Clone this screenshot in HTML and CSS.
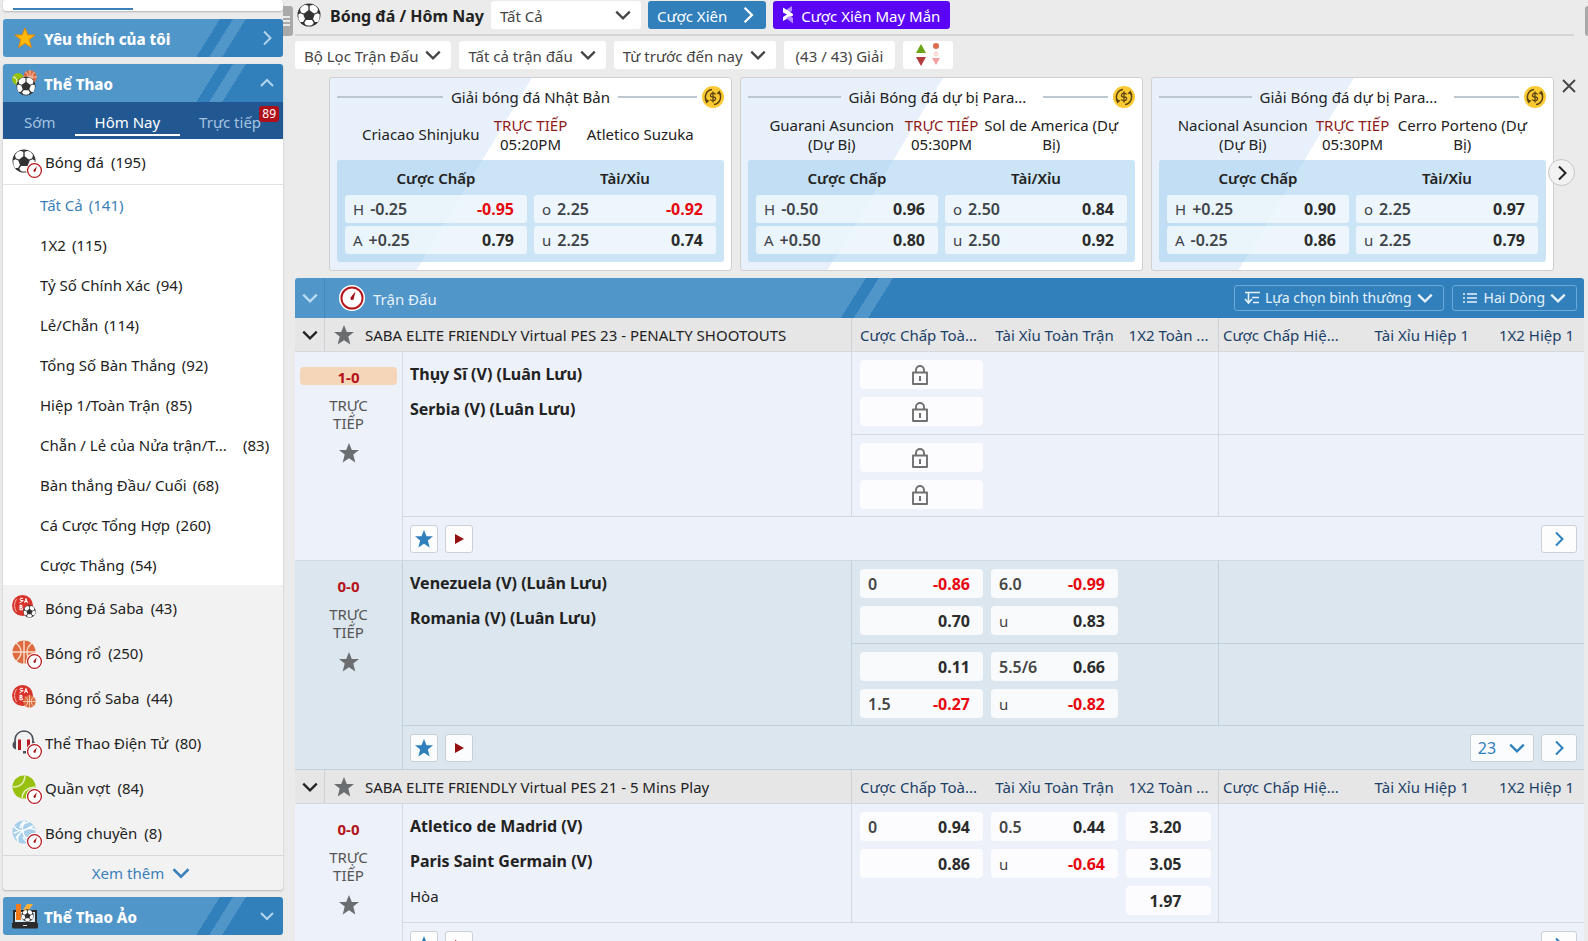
FILE: index.html
```html
<!DOCTYPE html>
<html lang="vi">
<head>
<meta charset="utf-8">
<title>Bóng đá / Hôm Nay</title>
<link rel="stylesheet" href="styles.css">
</head>
<body>
<svg class="defs" aria-hidden="true">
  <symbol id="i-down" viewBox="0 0 16 16"><path d="M2 5l6 6 6-6" fill="none" stroke="currentColor" stroke-width="2"/></symbol>
  <symbol id="i-up" viewBox="0 0 16 16"><path d="M2 11l6-6 6 6" fill="none" stroke="currentColor" stroke-width="2"/></symbol>
  <symbol id="i-right" viewBox="0 0 16 16"><path d="M5 1.500l6.500 6.500L5 14.500" fill="none" stroke="currentColor" stroke-width="2"/></symbol>
  <symbol id="i-star" viewBox="0 0 20 20"><path d="M10 0l2.800 7H20l-5.700 4.600 2 7.900L10 15.200l-6.300 4.300 2-7.900L0 7h7.200z" fill="currentColor"/></symbol>
  <symbol id="i-play" viewBox="0 0 12 12"><path d="M2 1l9 5-9 5z" fill="currentColor"/></symbol>
  <symbol id="i-lock" viewBox="0 0 16 20"><path d="M1 7.500h14v11.500H1zM4 7.500V5a4 4 0 0 1 8 0v2.500" fill="none" stroke="currentColor" stroke-width="1.900" stroke-linejoin="round"/><path d="M8 11v5" stroke="currentColor" stroke-width="2"/></symbol>
  <symbol id="i-ball" viewBox="0 0 24 24"><circle cx="12" cy="12" r="11.500" fill="#333"/><g fill="#fff"><path d="M12.700 2.800l3.300-1q3.600 1.500 5 4.300l-.8 3.200-3.200 1.200-4.300-3.200z"/><path d="M11.300 2.800L8 1.800Q4.400 3.300 3 6.100l.8 3.200L7 10.500l4.300-3.200z"/><path d="M1.300 11.500l2-1.300 3 1.200 1.700 4.600-2 3-3 .1q-2-3.300-1.700-7.600z"/><path d="M22.700 11.500l-2-1.300-3 1.200-1.700 4.600 2 3 3 .1q2-3.300 1.700-7.600z"/><path d="M9 17h6l1.700 2.700-1.500 2.300q-3.200 1-6.400 0l-1.500-2.300z"/></g></symbol>
  <symbol id="i-clock" viewBox="0 0 16 16"><circle cx="8" cy="8" r="8" fill="#fff"/><circle cx="8" cy="8" r="6.500" fill="#fff" stroke="#b5161c" stroke-width="1.200"/><path d="M7.400 9.200L7 7.800l3.200-3.900-1.300 5.200z" fill="#a01015"/></symbol>
  <symbol id="i-basket" viewBox="0 0 24 24"><circle cx="12" cy="12" r="11.500" fill="#dd6b3f"/><path d="M12 0v24M0 12h24M4 3q5 4 5 9t-5 9M20 3q-5 4-5 9t5 9" fill="none" stroke="#f7dccb" stroke-width="1.400"/></symbol>
  <symbol id="i-saba" viewBox="0 0 22 22"><circle cx="10.500" cy="10.500" r="10.500" fill="#d8342c"/><path d="M4.500 4q-4 6.500 0 13" fill="none" stroke="#f3b4b0" stroke-width="1"/></symbol>
  <symbol id="i-headset" viewBox="0 0 24 24"><path d="M3 12V9.500a9 8.500 0 0 1 18 0V12" fill="none" stroke="#4a4f58" stroke-width="1.600"/><path d="M4 10.500v9q-3.500-1-3.500-4.500t3.500-4.500zM20 10.500v9q3.500-1 3.500-4.500t-3.500-4.500zM11 21h3v2.500h-3z" fill="#4a4f58"/><path d="M6 9.500h3v10.500H6zM15 9.500h3v10.500h-3z" fill="#b71c22"/></symbol>
  <symbol id="i-tennis" viewBox="0 0 24 24"><circle cx="12" cy="12" r="11.500" fill="#97c00f"/><path d="M1 12q11 0 12-11M10 23q1-10 13-11" fill="none" stroke="#e4efb8" stroke-width="1.500"/></symbol>
  <symbol id="i-volley" viewBox="0 0 24 24"><circle cx="12" cy="12" r="11.500" fill="#a9d0ea"/><path d="M11 11Q8 3 17 2M11 11q7-5 12-1M11 11q0 8 9 9M11 11q-6 0-9-5M11 11q-7 4-5 11M8 8q1-5 5-7M2 13q4-1 6-3M4 18q2-3 4-4M16 8q3-1 5-2M15 18q5-3 8-2M11 17q1 3 4 5" fill="none" stroke="#fff" stroke-width="1.400"/></symbol>
  <symbol id="i-coin" viewBox="0 0 22 22"><circle cx="11" cy="11" r="11" fill="#fbc932"/><path d="M5 15.500A7.500 7.500 0 0 1 10 3.500M17 6.500a7.500 7.500 0 0 1-5 12" fill="none" stroke="#5b4312" stroke-width="1.500"/><path d="M2.500 13l2 4.500 3-3zM19.500 9l-2-4.500-3 3z" fill="#5b4312"/><path d="M13.600 8.600Q13 7.200 11 7.200T8.500 9.100t2.500 1.900 2.600 1.900-2.600 1.900-2.700-1.400M11 5.500v11" fill="none" stroke="#5b4312" stroke-width="1.300"/></symbol>
</svg>

<div class="app">
  <aside class="sidebar">
    <div class="side-card side-top"><span class="side-top-line"></span></div>
    <button class="side-bar"><svg class="star-gold" width="24" height="24" viewBox="-2 -2 24 24"><path d="M10 0l2.800 7H20l-5.700 4.600 2 7.900L10 15.200l-6.300 4.300 2-7.900L0 7h7.200z" fill="#ffb90a" stroke="#e68a00"/></svg><span class="side-title">Yêu thích của tôi</span><svg class="side-chev" width="16" height="16"><use href="#i-right"/></svg></button>

    <section class="side-card">
      <button class="side-bar side-bar-open"><svg width="26" height="26" viewBox="0 0 26 26"><circle cx="6" cy="9" r="6" fill="#97c00f"/><path d="M1 7q4 0 4 6" stroke="#fff" fill="none"/><svg x="11" y="0" width="14" height="14"><use href="#i-basket"/></svg><svg x="4" y="6" width="20" height="20"><use href="#i-ball"/></svg></svg><span class="side-title">Thể Thao</span><svg class="side-chev" width="16" height="16"><use href="#i-up"/></svg></button>
      <nav class="side-tabs">
        <a href="#" class="side-tab">Sớm</a>
        <a href="#" class="side-tab side-tab-on">Hôm Nay</a>
        <a href="#" class="side-tab">Trực tiếp<span class="side-badge">89</span></a>
      </nav>
      <a href="#" class="sport sport-on"><span class="sport-icon"><svg width="24" height="24"><use href="#i-ball"/></svg><svg class="live" width="17" height="17"><use href="#i-clock"/></svg></span>Bóng đá<span class="count">(195)</span></a>
      <div class="subs">
        <a href="#" class="sub sub-on">Tất Cả<span class="count">(141)</span></a>
        <a href="#" class="sub">1X2<span class="count">(115)</span></a>
        <a href="#" class="sub">Tỷ Số Chính Xác<span class="count">(94)</span></a>
        <a href="#" class="sub">Lẻ/Chẵn<span class="count">(114)</span></a>
        <a href="#" class="sub">Tổng Số Bàn Thắng<span class="count">(92)</span></a>
        <a href="#" class="sub">Hiệp 1/Toàn Trận<span class="count">(85)</span></a>
        <a href="#" class="sub"><span class="sub-long">Chẵn / Lẻ của Nửa trận/T...</span><span class="count">(83)</span></a>
        <a href="#" class="sub">Bàn thắng Đầu/ Cuối<span class="count">(68)</span></a>
        <a href="#" class="sub">Cá Cược Tổng Hợp<span class="count">(260)</span></a>
        <a href="#" class="sub">Cược Thắng<span class="count">(54)</span></a>
      </div>
      <div class="sports">
        <a href="#" class="sport"><span class="sport-icon"><svg width="22" height="22"><use href="#i-saba"/><path class="saba-mark" d="M11 3.500q-3-1-3 .8t2.500 1.200T7.500 7.800M12.500 8L14 3.500 15.500 8M13 6.500h2M8 10v5M8 10q3 0 2 2.200H8q3 0 2.500 2.600H8"/></svg><svg class="mini" width="13" height="13"><use href="#i-ball"/></svg></span>Bóng Đá Saba<span class="count">(43)</span></a>
        <a href="#" class="sport"><span class="sport-icon"><svg width="24" height="24"><use href="#i-basket"/></svg><svg class="live" width="17" height="17"><use href="#i-clock"/></svg></span>Bóng rổ<span class="count">(250)</span></a>
        <a href="#" class="sport"><span class="sport-icon"><svg width="22" height="22"><use href="#i-saba"/><path class="saba-mark" d="M11 3.500q-3-1-3 .8t2.500 1.200T7.500 7.800M12.500 8L14 3.500 15.500 8M13 6.500h2M8 10v5M8 10q3 0 2 2.200H8q3 0 2.500 2.600H8"/></svg><svg class="mini" width="13" height="13"><use href="#i-basket"/></svg></span>Bóng rổ Saba<span class="count">(44)</span></a>
        <a href="#" class="sport"><span class="sport-icon"><svg width="24" height="24"><use href="#i-headset"/></svg><svg class="live" width="17" height="17"><use href="#i-clock"/></svg></span>Thể Thao Điện Tử<span class="count">(80)</span></a>
        <a href="#" class="sport"><span class="sport-icon"><svg width="24" height="24"><use href="#i-tennis"/></svg><svg class="live" width="17" height="17"><use href="#i-clock"/></svg></span>Quần vợt<span class="count">(84)</span></a>
        <a href="#" class="sport"><span class="sport-icon"><svg width="24" height="24"><use href="#i-volley"/></svg><svg class="live" width="17" height="17"><use href="#i-clock"/></svg></span>Bóng chuyền<span class="count">(8)</span></a>
      </div>
      <button class="more">Xem thêm<svg width="20" height="20"><use href="#i-down"/></svg></button>
    </section>

    <button class="side-bar"><svg width="26" height="26" viewBox="0 0 26 26"><path d="M2 8h22v12H2z" fill="#d9ecf6" stroke="#2b2b2b" stroke-width="2"/><path d="M4 1h5v16H4z" fill="#f07a1c"/><path d="M11 7l4-6h6l-4 6z" fill="#fbb03b"/><svg x="9" y="6" width="13" height="13"><use href="#i-ball"/></svg><path d="M0 20h26v4q0 1.500-2 1.500H2q-2 0-2-1.500z" fill="#2b2b2b"/><path d="M11 22h4v1h-4z" fill="#ddd"/></svg><span class="side-title">Thể Thao Ảo</span><svg class="side-chev" width="16" height="16"><use href="#i-down"/></svg></button>
    <div class="side-bar"></div>
  </aside>

  <button class="handle" aria-label="Thu gọn"><svg width="8" height="12" viewBox="0 0 8 12"><path d="M0 2h7M0 6h7M0 10h7" stroke="#fff" stroke-width="1.500"/></svg></button>

  <main class="main">
    <header class="head">
      <svg width="24" height="24"><use href="#i-ball"/></svg>
      <h1 class="head-title">Bóng đá / Hôm Nay</h1>
      <button class="pick pick-wide">Tất Cả<svg width="18" height="18"><use href="#i-down"/></svg></button>
      <button class="pill pill-blue">Cược Xiên<svg width="18" height="18"><use href="#i-right"/></svg></button>
      <button class="pill pill-purple"><svg width="12" height="18" viewBox="0 0 12 18"><path d="M10 0v5L5 8 1 6z" fill="#b58cff"/><path d="M1 1.500L11 8v1.500L1 15v-4l4-2.500-4-2z" fill="#fff"/><path d="M4 12l7 5.500V12L8 10z" fill="#b58cff"/></svg>Cược Xiên May Mắn</button>
    </header>
    <div class="filters">
      <button class="pick">Bộ Lọc Trận Đấu<svg width="18" height="18"><use href="#i-down"/></svg></button>
      <button class="pick">Tất cả trận đấu<svg width="18" height="18"><use href="#i-down"/></svg></button>
      <button class="pick">Từ trước đến nay<svg width="18" height="18"><use href="#i-down"/></svg></button>
      <button class="pick pick-plain">(43 / 43) Giải</button>
      <button class="pick pick-icon" aria-label="Biến động"><svg width="26" height="24" viewBox="0 0 26 24"><path d="M6 1l5 9H1z" fill="#6aa414"/><path d="M1 14h10l-5 9z" fill="#b33a3a"/><circle cx="21" cy="3" r="3" fill="#dd6b4d"/><circle cx="21" cy="11" r="2.500" fill="#fbdcd8"/><path d="M17 15h8l-4 7z" fill="#f0a0a0"/></svg></button>
    </div>

    <section class="carousel">
      <article class="card">
        <div class="card-head"><span class="rule"></span><span class="card-title">Giải bóng đá Nhật Bản</span><span class="card-end"><span class="rule"></span><svg width="22" height="22"><use href="#i-coin"/></svg></span></div>
        <div class="card-teams"><span>Criacao Shinjuku</span><span class="card-time"><b>TRỰC TIẾP</b>05:20PM</span><span>Atletico Suzuka</span></div>
        <div class="card-odds"><h3>Cược Chấp</h3><h3>Tài/Xỉu</h3>
          <button class="co"><i>H</i>-0.25<b class="neg">-0.95</b></button><button class="co"><i>o</i>2.25<b class="neg">-0.92</b></button>
          <button class="co"><i>A</i>+0.25<b>0.79</b></button><button class="co"><i>u</i>2.25<b>0.74</b></button></div>
      </article>
      <article class="card">
        <div class="card-head"><span class="rule"></span><span class="card-title card-title-cut">Giải Bóng đá dự bị Para...</span><span class="card-end"><span class="rule"></span><svg width="22" height="22"><use href="#i-coin"/></svg></span></div>
        <div class="card-teams"><span>Guarani Asuncion (Dự Bị)</span><span class="card-time"><b>TRỰC TIẾP</b>05:30PM</span><span>Sol de America (Dự Bị)</span></div>
        <div class="card-odds"><h3>Cược Chấp</h3><h3>Tài/Xỉu</h3>
          <button class="co"><i>H</i>-0.50<b>0.96</b></button><button class="co"><i>o</i>2.50<b>0.84</b></button>
          <button class="co"><i>A</i>+0.50<b>0.80</b></button><button class="co"><i>u</i>2.50<b>0.92</b></button></div>
      </article>
      <article class="card">
        <div class="card-head"><span class="rule"></span><span class="card-title card-title-cut">Giải Bóng đá dự bị Para...</span><span class="card-end"><span class="rule"></span><svg width="22" height="22"><use href="#i-coin"/></svg></span></div>
        <div class="card-teams"><span>Nacional Asuncion (Dự Bị)</span><span class="card-time"><b>TRỰC TIẾP</b>05:30PM</span><span>Cerro Porteno (Dự Bị)</span></div>
        <div class="card-odds"><h3>Cược Chấp</h3><h3>Tài/Xỉu</h3>
          <button class="co"><i>H</i>+0.25<b>0.90</b></button><button class="co"><i>o</i>2.25<b>0.97</b></button>
          <button class="co"><i>A</i>-0.25<b>0.86</b></button><button class="co"><i>u</i>2.25<b>0.79</b></button></div>
      </article>
      <button class="close" aria-label="Đóng"><svg width="14" height="14" viewBox="0 0 14 14"><path d="M1 1l12 12M13 1L1 13" stroke="#444" stroke-width="1.800"/></svg></button>
      <button class="next" aria-label="Tiếp"><svg width="16" height="16"><use href="#i-right"/></svg></button>
    </section>

    <div class="board">
      <div class="board-head">
        <button class="fold fold-light" aria-label="Thu gọn"><svg width="18" height="18"><use href="#i-down"/></svg></button>
        <svg class="board-icon" width="26" height="26"><use href="#i-clock"/></svg>
        <h2 class="board-title">Trận Đấu</h2>
        <button class="opt"><svg width="17" height="14" viewBox="0 0 17 14"><path d="M1 1.500h15M8 6.500h7M9 11.500h6M4.500 2v9M1 8l3.500 4L8 8" fill="none" stroke="currentColor" stroke-width="1.600"/></svg>Lựa chọn bình thường<svg width="18" height="18"><use href="#i-down"/></svg></button>
        <button class="opt"><svg class="opt-list" width="16" height="12" viewBox="0 0 16 12"><path d="M1 2h2M5 2h10M1 6h2M5 6h10M1 10h2M5 10h10" stroke="currentColor" stroke-width="1.500"/></svg>Hai Dòng<svg width="18" height="18"><use href="#i-down"/></svg></button>
      </div>

      <div class="league">
        <button class="fold" aria-label="Thu gọn"><svg width="18" height="18"><use href="#i-down"/></svg></button>
        <h3 class="league-name"><svg width="20" height="20"><use href="#i-star"/></svg>SABA ELITE FRIENDLY Virtual PES 23 - PENALTY SHOOTOUTS</h3>
        <div class="cols"><span>Cược Chấp Toà...</span><span>Tài Xỉu Toàn Trận</span><span>1X2 Toàn ...</span></div>
        <div class="cols"><span>Cược Chấp Hiệ...</span><span>Tài Xỉu Hiệp 1</span><span>1X2 Hiệp 1</span></div>
      </div>

      <article class="match">
        <div class="score"><strong class="score-hot">1-0</strong><span>TRỰC<br>TIẾP</span><svg width="20" height="20"><use href="#i-star"/></svg></div>
        <div class="body">
          <div class="teams"><b>Thụy Sĩ (V) (Luân Lưu)</b><b>Serbia (V) (Luân Lưu)</b></div>
          <div class="lines">
            <div class="line"><div class="odds">
              <div class="odd-col"><button class="odd lock" aria-label="Khóa"><svg width="16" height="20"><use href="#i-lock"/></svg></button><button class="odd lock" aria-label="Khóa"><svg width="16" height="20"><use href="#i-lock"/></svg></button></div>
            </div><div class="odds"></div></div>
            <div class="line"><div class="odds">
              <div class="odd-col"><button class="odd lock" aria-label="Khóa"><svg width="16" height="20"><use href="#i-lock"/></svg></button><button class="odd lock" aria-label="Khóa"><svg width="16" height="20"><use href="#i-lock"/></svg></button></div>
            </div><div class="odds"></div></div>
          </div>
        </div>
        <div class="foot"><button class="sq sq-star" aria-label="Yêu thích"><svg width="18" height="18"><use href="#i-star"/></svg></button><button class="sq sq-play" aria-label="Phát"><svg width="12" height="12"><use href="#i-play"/></svg></button><button class="go" aria-label="Xem"><svg width="16" height="16"><use href="#i-right"/></svg></button></div>
      </article>

      <article class="match match-alt">
        <div class="score"><strong>0-0</strong><span>TRỰC<br>TIẾP</span><svg width="20" height="20"><use href="#i-star"/></svg></div>
        <div class="body">
          <div class="teams"><b>Venezuela (V) (Luân Lưu)</b><b>Romania (V) (Luân Lưu)</b></div>
          <div class="lines">
            <div class="line"><div class="odds">
              <div class="odd-col"><button class="odd"><em>0</em><b class="neg">-0.86</b></button><button class="odd"><b>0.70</b></button></div>
              <div class="odd-col"><button class="odd"><em>6.0</em><b class="neg">-0.99</b></button><button class="odd"><i>u</i><b>0.83</b></button></div>
            </div><div class="odds"></div></div>
            <div class="line"><div class="odds">
              <div class="odd-col"><button class="odd"><b>0.11</b></button><button class="odd"><em>1.5</em><b class="neg">-0.27</b></button></div>
              <div class="odd-col"><button class="odd"><em>5.5/6</em><b>0.66</b></button><button class="odd"><i>u</i><b class="neg">-0.82</b></button></div>
            </div><div class="odds"></div></div>
          </div>
        </div>
        <div class="foot"><button class="sq sq-star" aria-label="Yêu thích"><svg width="18" height="18"><use href="#i-star"/></svg></button><button class="sq sq-play" aria-label="Phát"><svg width="12" height="12"><use href="#i-play"/></svg></button><button class="go go-count">23<svg width="18" height="18"><use href="#i-down"/></svg></button><button class="go" aria-label="Xem"><svg width="16" height="16"><use href="#i-right"/></svg></button></div>
      </article>

      <div class="league">
        <button class="fold" aria-label="Thu gọn"><svg width="18" height="18"><use href="#i-down"/></svg></button>
        <h3 class="league-name"><svg width="20" height="20"><use href="#i-star"/></svg>SABA ELITE FRIENDLY Virtual PES 21 - 5 Mins Play</h3>
        <div class="cols"><span>Cược Chấp Toà...</span><span>Tài Xỉu Toàn Trận</span><span>1X2 Toàn ...</span></div>
        <div class="cols"><span>Cược Chấp Hiệ...</span><span>Tài Xỉu Hiệp 1</span><span>1X2 Hiệp 1</span></div>
      </div>

      <article class="match">
        <div class="score"><strong>0-0</strong><span>TRỰC<br>TIẾP</span><svg width="20" height="20"><use href="#i-star"/></svg></div>
        <div class="body">
          <div class="teams"><b>Atletico de Madrid (V)</b><b>Paris Saint Germain (V)</b><span>Hòa</span></div>
          <div class="lines">
            <div class="line"><div class="odds">
              <div class="odd-col"><button class="odd"><em>0</em><b>0.94</b></button><button class="odd"><b>0.86</b></button></div>
              <div class="odd-col"><button class="odd"><em>0.5</em><b>0.44</b></button><button class="odd"><i>u</i><b class="neg">-0.64</b></button></div>
              <div class="odd-col odd-three"><button class="odd"><b>3.20</b></button><button class="odd"><b>3.05</b></button><button class="odd"><b>1.97</b></button></div>
            </div><div class="odds"></div></div>
          </div>
        </div>
        <div class="foot"><button class="sq sq-star" aria-label="Yêu thích"><svg width="18" height="18"><use href="#i-star"/></svg></button><button class="sq sq-play" aria-label="Phát"><svg width="12" height="12"><use href="#i-play"/></svg></button><button class="go" aria-label="Xem"><svg width="16" height="16"><use href="#i-right"/></svg></button></div>
      </article>
    </div>
  </main>
  <div class="rail"></div>
</div>
</body>
</html>
```
FILE: styles.css
```css
* { box-sizing: border-box; }
html, body { height: 100%; margin: 0; overflow: hidden; }
body { background: #ebebeb; color: #222; font: 15px/20px "Noto Sans", "Open Sans", sans-serif; }
button { font: inherit; color: inherit; border: 0; padding: 0; background: none; cursor: pointer; }
a { color: inherit; text-decoration: none; }
h1, h2, h3 { margin: 0; font-size: 15px; font-weight: 400; }
svg { flex: none; }
em, i { font-style: normal; }
.defs { position: absolute; width: 0; height: 0; }
.saba-mark { fill: none; stroke: #fff; stroke-width: 1; }

.app { display: flex; align-items: flex-start; }

/* Sidebar */
.sidebar { flex: none; width: 283px; padding-left: 3px; display: flex; flex-direction: column; gap: 7px; }
.side-card { border-radius: 3px; box-shadow: 0 1px 2px #b5b5b5; background: #f2f2f2; }
.side-top { height: 11px; margin-bottom: 1px; padding: 8px 10px 0; background: #fff; }
.side-top-line { display: block; width: 120px; height: 2px; background: #3a7fb8; }
.side-bar {
  display: flex; align-items: center; gap: 6px; width: 100%; height: 38px; padding: 0 8px 0 9px;
  border-radius: 3px; color: #fff; text-align: left;
  background: linear-gradient(122deg, #5196c9 184px, #3180bc 184px 195px, #5196c9 195px 206px, #3180bc 206px);
}
.side-bar-open { border-radius: 3px 3px 0 0; }
.star-gold { margin: 0 1px; }
.side-title { font-weight: 800; padding-top: 1px; }
.side-chev { margin-left: auto; color: #b3d4ed; }
.side-tabs { display: flex; height: 37px; padding: 0 12px; background: #215892; }
.side-tab { position: relative; padding: 0 9px; line-height: 40px; color: #a5c3e0; white-space: nowrap; }
.side-tab-on { margin: 0 10px; padding: 0 20px; color: #fff; }
.side-tab-on::after { content: ""; position: absolute; left: 0; right: 0; bottom: 3px; height: 2px; background: #fff; }
.side-badge { position: absolute; top: 4px; right: -9px; height: 16px; padding: 0 3px; border-radius: 3px; background: #b01018; color: #fff; font-size: 12px; line-height: 16px; }
.sport { display: flex; align-items: center; height: 45px; padding-left: 9px; }
.sport-on { background: #fff; height: 46px; border-bottom: 1px solid #e2e2e2; }
.sport-icon { position: relative; width: 33px; height: 26px; }
.sport-icon svg { display: block; }
.sport-icon .live { position: absolute; left: 14px; top: 13px; }
.sport-icon .mini { position: absolute; left: 11px; top: 10px; }
.count { margin-left: 7px; }
.subs { background: #fff; }
.sub { display: flex; align-items: center; height: 40px; padding-left: 37px; }
.sub-on { color: #3a7fb8; }
.sub-long { width: 197px; }
.sub .count { margin-left: 6px; }
.more { display: flex; align-items: center; justify-content: center; gap: 7px; width: 100%; height: 35px; padding-right: 3px; border-top: 1px solid #d8d8d8; color: #3a80ba; }
.handle { flex: none; width: 10px; height: 30px; margin-top: 6px; border-radius: 0 3px 3px 0; background: #a9a9a9; display: flex; align-items: center; }

/* Header */
.main { flex: 1; min-width: 0; padding: 0 0 0 2px; }
.head { display: flex; align-items: center; gap: 7px; height: 36px; padding: 1px 0 5px 2px; margin-right: 10px; border-bottom: 2px solid #d6d6d6; }
.head-title { font-size: 16px; font-weight: 700; margin: 2px 0 0 2px; white-space: nowrap; }
.pick, .pill { display: flex; align-items: center; gap: 5px; height: 28px; padding: 2px 9px 0; border-radius: 3px; background: #fff; color: #444; white-space: nowrap; }
.pick svg, .pill svg { margin-bottom: 2px; }
.pick-wide { width: 150px; justify-content: space-between; }
.pill { color: #fff; }
.pill-blue { background: #3180bc; gap: 12px; }
.pill-purple { background: #5a05f5; gap: 7px; padding-right: 10px; }
.filters { display: flex; gap: 8px; padding: 5px 0 8px; }
.filters .pick { padding: 2px 9px 0; gap: 6px; }
.filters .pick-plain { padding: 2px 12px 0; }
.filters .pick-icon { padding: 2px 12px 0; }

/* Featured matches */
.carousel { position: relative; display: grid; grid-template-columns: repeat(3, minmax(0, 1fr)); gap: 8px; padding: 0 30px 0 34px; margin-bottom: 7px; }
.card { border: 1px solid #cfcfcf; border-radius: 3px; padding: 6px 7px 8px; background: linear-gradient(121deg, #e8f1fb 173px, #fff 173px); }
.card-head { display: grid; grid-template-columns: 1fr auto 1fr; align-items: center; gap: 8px; height: 24px; }
.card-title { white-space: nowrap; line-height: 26px; }
.card-title-cut { width: 186px; }
.card-end { display: flex; align-items: center; gap: 5px; }
.rule { flex: 1; height: 2px; background: #bcc7cf; }
.card-teams { display: grid; grid-template-columns: 1fr 76px 1fr; align-items: center; height: 52px; text-align: center; line-height: 19px; padding: 4px 12px 3px; }
.card-time { white-space: nowrap; }
.card-time b { display: block; font-weight: 400; color: #8e1a1a; }
.card-odds { display: grid; grid-template-columns: 1fr 1fr; gap: 3px 7px; padding: 0 8px 8px; border-radius: 3px; background: rgba(160, 206, 238, .55); }
.card-odds h3 { height: 32px; text-align: center; font-weight: 600; line-height: 36px; }
.co { display: flex; align-items: center; height: 28px; padding: 0 13px 0 8px; border-radius: 3px; background: rgba(255, 255, 255, .65); color: #3e4348; font-size: 16px; font-weight: 600; }
.co i { font-size: 15px; font-weight: 400; margin-right: 6px; }
.co b { margin-left: auto; font-weight: 700; color: #2b2b2b; }
.co .neg, .odd .neg { color: #e6070f; }
.close { position: absolute; right: 8px; top: 2px; height: 14px; display: flex; }
.next { position: absolute; right: 9px; top: 82px; width: 27px; height: 27px; border-radius: 50%; background: #f2f2f2; border: 1px solid #c4c4c4; display: flex; align-items: center; justify-content: center; }

/* Board */
.board-head {
  display: flex; align-items: center; height: 40px; padding-right: 7px; border-radius: 3px 3px 0 0; color: #e6f2fb;
  background: linear-gradient(122deg, #5196c9 calc(50% - 73px), #3180bc calc(50% - 73px) calc(50% - 62px), #5196c9 calc(50% - 62px) calc(50% - 50px), #3180bc calc(50% - 50px));
}
.fold { display: flex; align-items: center; justify-content: center; align-self: stretch; width: 30px; flex: none; border-right: 1px solid #cdd1d5; }
.fold-light { color: #b9dcf5; border-color: #4389be; }
.board-icon { margin: 0 8px 0 14px; }
.board-title { flex: 1; padding-top: 1px; }
.opt { display: flex; align-items: center; gap: 4px; height: 26px; padding: 0 9px; margin-left: 8px; border: 1px solid #6aaadb; border-radius: 3px; font-size: 14px; }
.opt-list { margin-right: 2px; }
.league, .body { display: grid; }
.league { grid-template-columns: 30px minmax(0, 1fr) 367px 366px; height: 34px; border-bottom: 1px solid #d5d9dd; background: #e6e6e6; }
.league-name { display: flex; align-items: center; gap: 11px; padding-left: 9px; white-space: nowrap; overflow: hidden; }
.league-name svg, .score svg { color: #6b6e70; }
.cols { display: grid; grid-template-columns: 123px 127px 85px; gap: 8px; padding-left: 8px; border-left: 1px solid #cdd1d5; color: #1c3f66; align-items: center; white-space: nowrap; text-align: center; }
.cols + .cols { grid-template-columns: 123px 115px 97px; padding-left: 4px; text-align: right; }
.cols span:first-child { text-align: left; }
.match { display: grid; grid-template-columns: 107px minmax(0, 1fr); grid-template-rows: auto 44px; background: #edf1f9; --line: #d3d9e0; }
.match-alt { background: #dce6ee; --line: #c3cfd9; }
.score { grid-row: 1 / 3; display: flex; flex-direction: column; align-items: center; padding: 15px 5px 0; text-align: center; line-height: 18px; color: #555; border-bottom: 1px solid var(--line); }
.score strong { align-self: stretch; height: 18px; margin-bottom: 11px; line-height: 21px; color: #b5121b; border-radius: 4px; }
.score-hot { background: #f5d6b8; }
.score svg { margin-top: 11px; }
.body { grid-template-columns: minmax(0, 1fr) 733px; border-left: 1px solid var(--line); border-bottom: 1px solid var(--line); }
.teams { display: flex; flex-direction: column; padding: 5px 7px 0; line-height: 35px; }
.teams b { font-size: 16px; }
.lines { display: flex; flex-direction: column; }
.line { display: grid; grid-template-columns: 367px 366px; min-height: 82px; }
.line + .line { border-top: 1px solid var(--line); }
.odds { display: grid; grid-template-columns: 123px 127px 85px; gap: 8px; padding: 8px 0 7px 8px; border-left: 1px solid var(--line); align-items: start; }
.odd-col { display: grid; gap: 8px; }
.odd { display: flex; align-items: center; height: 29px; padding: 0 13px 0 8px; border-radius: 4px; background: rgba(255, 255, 255, .8); color: #444; }
.odd em { font-size: 16px; font-weight: 600; }
.odd b { margin-left: auto; font-size: 16px; color: #2b2b2b; }
.lock { justify-content: center; color: #707070; padding: 0 4px 0 0; }
.odd-three .odd { justify-content: center; padding: 0 6px 0 0; }
.odd-three b { margin: 0; }
.foot { display: flex; align-items: center; gap: 7px; padding: 0 7px; border-left: 1px solid var(--line); border-bottom: 1px solid var(--line); }
.sq, .go { display: flex; align-items: center; justify-content: center; height: 28px; border: 1px solid #c9d0d6; border-radius: 3px; background: rgba(255, 255, 255, .85); color: #2f80bd; }
.sq { width: 28px; }
.sq-play { color: #941010; margin-right: auto; }
.go { width: 36px; }
.go-count { width: 64px; gap: 12px; font-size: 16px; }
.rail { flex: none; width: 4px; }
.rail::before { content: ""; position: absolute; right: 0; top: 6px; width: 3px; height: 30px; border-radius: 3px 0 0 3px; background: #a9a9a9; }
```
